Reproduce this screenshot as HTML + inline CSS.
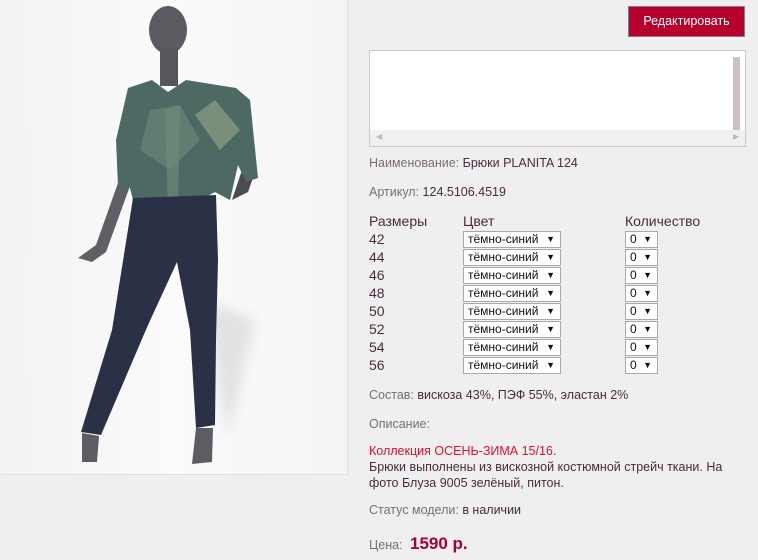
<!DOCTYPE html>
<html><head><meta charset="utf-8"><style>
body{margin:0;width:758px;height:560px;background:#efefef;font-family:"Liberation Sans",sans-serif;overflow:hidden;position:relative}
.a{position:absolute}
.lbl{color:#7a6e74;font-size:12.5px}
.val{color:#4a2a3e}
.sel{position:absolute;border:1px solid #a9a9a9;background:#fff;font-size:12px;color:#111;line-height:15px;padding-left:4px;box-sizing:border-box;height:17px}
.sel span{position:absolute;right:5px;top:0;font-size:9px}
.n{position:absolute;left:369px;font-size:14px;color:#4a2a3e}
</style></head><body>
<div class="a" style="left:0;top:0;width:347px;height:474px;background:linear-gradient(90deg,#f2f2f2,#fbfbfb 50%,#f4f4f4);border-right:1px solid #e4e0dc;border-bottom:1px solid #e4e0dc">
<svg width="347" height="474">
<defs><filter id="b"><feGaussianBlur stdDeviation="6"/></filter></defs>
<path d="M205 300 L255 320 L228 440 Z" fill="#e2e2e2" filter="url(#b)"/>
<ellipse cx="168" cy="30" rx="19" ry="24" fill="#5a5c62"/>
<rect x="160" y="48" width="18" height="38" fill="#55575c"/>
<path d="M118 183 L130 186 L106 252 L92 262 L78 258 L96 245 Z" fill="#5e6066"/>
<path d="M232 200 L248 192 L255 172 L242 170 Z" fill="#4a4c52"/>
<path d="M128 88 L152 80 L168 92 L186 80 L236 88 L250 100 L258 178 L246 182 L238 165 L230 200 L215 192 L200 200 L160 205 L135 208 L130 188 L118 186 L116 140 Z" fill="#4d6963"/>
<path d="M150 110 L180 105 L200 140 L170 170 L140 150 Z" fill="#6e8b7c" opacity=".6"/>
<path d="M195 115 L215 100 L240 130 L220 150 Z" fill="#9aa88a" opacity=".6"/>
<path d="M165 110 L180 105 L178 205 L168 210 Z" fill="#6f8a7a" opacity=".7"/>
<path d="M133 198 L216 195 L218 260 L216 340 L215 425 L196 428 L190 330 L177 262 L148 325 L101 435 L81 432 L112 330 Z" fill="#2a3146"/>
<path d="M82 433 L99 436 L97 462 L82 462 Z" fill="#5b5d62"/>
<path d="M196 428 L213 428 L212 462 L192 464 Z" fill="#5b5d62"/>
</svg></div>
<div class="a" style="left:628px;top:6px;width:115px;height:29px;background:#b8002e;border:1px solid #8d7a82;color:#fff;font-size:12.5px;text-align:center;line-height:29px">Редактировать</div>
<div class="a" style="left:369px;top:50px;width:375px;height:95px;background:#fff;border:1px solid #d3c5ca">
<div class="a" style="left:363px;top:6px;width:7px;height:73px;background:#cdc1c2"></div>
<div class="a" style="left:0;top:79px;width:375px;height:16px;background:#f0f0f0"></div>
<div class="a" style="left:6px;top:81px;color:#bbb;font-size:8px">◀</div>
<div class="a" style="left:363px;top:81px;color:#bbb;font-size:8px">▶</div>
</div>
<div class="a lbl" style="left:369px;top:156px">Наименование: <span class="val">Брюки PLANITA 124</span></div>
<div class="a lbl" style="left:369px;top:185px">Артикул: <span class="val">124.5106.4519</span></div>
<div class="n" style="top:213px">Размеры</div>
<div class="n" style="left:463px;top:213px">Цвет</div>
<div class="n" style="left:625px;top:213px">Количество</div>
<div class="n" style="top:231px">42</div><div class="n" style="top:249px">44</div><div class="n" style="top:267px">46</div><div class="n" style="top:285px">48</div><div class="n" style="top:303px">50</div><div class="n" style="top:321px">52</div><div class="n" style="top:339px">54</div><div class="n" style="top:357px">56</div>
<div class="sel" style="left:463px;top:231px;width:98px">тёмно-синий<span>▼</span></div><div class="sel" style="left:625px;top:231px;width:33px">0<span>▼</span></div>
<div class="sel" style="left:463px;top:249px;width:98px">тёмно-синий<span>▼</span></div><div class="sel" style="left:625px;top:249px;width:33px">0<span>▼</span></div>
<div class="sel" style="left:463px;top:267px;width:98px">тёмно-синий<span>▼</span></div><div class="sel" style="left:625px;top:267px;width:33px">0<span>▼</span></div>
<div class="sel" style="left:463px;top:285px;width:98px">тёмно-синий<span>▼</span></div><div class="sel" style="left:625px;top:285px;width:33px">0<span>▼</span></div>
<div class="sel" style="left:463px;top:303px;width:98px">тёмно-синий<span>▼</span></div><div class="sel" style="left:625px;top:303px;width:33px">0<span>▼</span></div>
<div class="sel" style="left:463px;top:321px;width:98px">тёмно-синий<span>▼</span></div><div class="sel" style="left:625px;top:321px;width:33px">0<span>▼</span></div>
<div class="sel" style="left:463px;top:339px;width:98px">тёмно-синий<span>▼</span></div><div class="sel" style="left:625px;top:339px;width:33px">0<span>▼</span></div>
<div class="sel" style="left:463px;top:357px;width:98px">тёмно-синий<span>▼</span></div><div class="sel" style="left:625px;top:357px;width:33px">0<span>▼</span></div>
<div class="a lbl" style="left:369px;top:388px">Состав: <span class="val">вискоза 43%, ПЭФ 55%, эластан 2%</span></div>
<div class="a lbl" style="left:369px;top:417px">Описание:</div>
<div class="a" style="left:369px;top:443px;width:380px;font-size:12.5px;line-height:16px;color:#4a2a3e"><span style="color:#e0102e">Коллекция ОСЕНЬ-ЗИМА 15/16.</span><br>Брюки выполнены из вискозной костюмной стрейч ткани. На фото Блуза 9005 зелёный, питон.</div>
<div class="a lbl" style="left:369px;top:503px">Статус модели: <span class="val">в наличии</span></div>
<div class="a lbl" style="left:369px;top:534px">Цена: <span style="color:#a8002e;font-size:17px;font-weight:bold;margin-left:4px">1590 р.</span></div>
</body></html>
